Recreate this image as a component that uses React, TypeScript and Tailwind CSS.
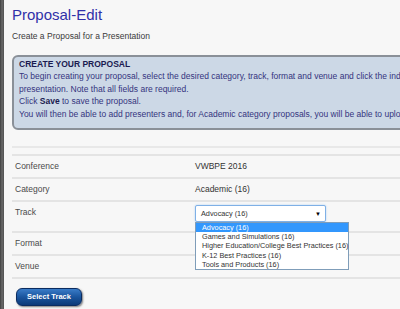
import React from "react";

const font = "font-['Liberation_Sans',Arial,sans-serif]";

function Row({ label, children, h, pt = "pt-[5px]" }: { label: string; children?: React.ReactNode; h: string; pt?: string }) {
  return (
    <div className={`flex ${h} border-b-2 border-[#e4e4e4]`}>
      <div className={`w-[183px] pl-[3px] pt-[5px] text-[8.5px] leading-[10px] text-[#4a4a4a]`}>{label}</div>
      <div className={`flex-1 ${pt} text-[8.5px] leading-[10px] text-[#333]`}>{children}</div>
    </div>
  );
}

export default function App() {
  const options = [
    "Advocacy (16)",
    "Games and Simulations (16)",
    "Higher Education/College Best Practices (16)",
    "K-12 Best Practices (16)",
    "Tools and Products (16)",
  ];
  return (
    <div className={`w-[400px] h-[309px] overflow-hidden flex bg-[#f7f7f7] ${font}`}>
      <div className="w-[4px] shrink-0 bg-gradient-to-r from-[#3f3f3f] via-[#6a6a6a] to-[#505050]" />
      <div className="flex-1 min-w-0 pl-[8px] overflow-hidden">
        <div className="pt-[7px] text-[15px] leading-[15px] text-[#3030a8]">Proposal-Edit</div>
        <div className="mt-[9px] text-[8.5px] leading-[10px] text-[#3a3a3a]">Create a Proposal for a Presentation</div>
        <div className="mt-[14px] w-[440px] h-[75px] border-2 border-[#8a9098] rounded-[6px] bg-[#ccd8e6] pl-[5px] pt-[1px] text-[8.5px] leading-[12.4px] text-[#34347e] whitespace-nowrap overflow-hidden">
          <div className="font-bold text-[#1a1a50]">CREATE YOUR PROPOSAL</div>
          <div>To begin creating your proposal, select the desired category, track, format and venue and click the indicated button to create your</div>
          <div>presentation. Note that all fields are required.</div>
          <div>
            Click <span className="font-bold text-[#1a1a50]">Save</span> to save the proposal.
          </div>
          <div>You will then be able to add presenters and, for Academic category proposals, you will be able to upload your paper.</div>
        </div>
        <div className="mt-[16px] border-t-2 border-[#e8e8e8]" />
        <div className="mt-[6px] border-t-2 border-[#e4e4e4]" />
        <Row label="Conference" h="h-[23px]">VWBPE 2016</Row>
        <Row label="Category" h="h-[23px]">Academic (16)</Row>
        <Row label="Track" h="h-[31px]" pt="pt-[3px]">
          <div className="relative w-[131px]">
            <div className="h-[17px] border border-[#7fb0e6] rounded-[2px] bg-white shadow-[0_0_2px_#a9cdf3] flex items-center pl-[5px] pr-[4px] text-[7.3px] text-[#333]">
              <span className="flex-1">Advocacy (16)</span>
              <span className="text-[6px] text-black">▼</span>
            </div>
            <div className="absolute left-0 top-[17px] w-[154px] bg-white border border-[#7f9db9] z-10">
              {options.map((o, i) => (
                <div
                  key={o}
                  className={`h-[9.2px] leading-[9.2px] pl-[6px] text-[7.3px] whitespace-nowrap ${i === 0 ? "bg-[#3297fd] text-white" : "text-[#333]"}`}
                >
                  {o}
                </div>
              ))}
            </div>
          </div>
        </Row>
        <Row label="Format" h="h-[23px]" />
        <Row label="Venue" h="h-[23px]" />
        <div className="mt-[3px] ml-[4px]">
          <button className="w-[66px] h-[18px] rounded-[6px] border border-[#0b2c60] bg-gradient-to-b from-[#3a7cc8] via-[#1a559e] to-[#0c3a78] text-white font-bold text-[7.5px] shadow-[1px_1px_2px_rgba(0,0,0,0.5)]">
            Select Track
          </button>
        </div>
      </div>
    </div>
  );
}
